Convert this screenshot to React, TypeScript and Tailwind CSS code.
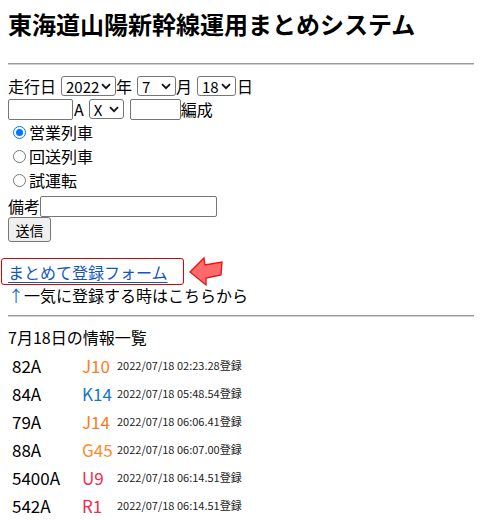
import React from "react";

const FONT = { fontFamily: '"Noto Sans CJK JP", "Noto Sans", sans-serif' };

function Chevron() {
  return (
    <svg width="10" height="7" viewBox="0 0 10 7" className="shrink-0">
      <path d="M1 1.2 L5 5.2 L9 1.2" fill="none" stroke="#111" strokeWidth="1.8" />
    </svg>
  );
}

function FakeSelect({ value, w }: { value: string; w: string }) {
  return (
    <span
      className={`inline-flex h-[20px] items-center justify-between rounded-[3px] border border-[#767676] bg-white pl-[4px] pr-[4px] text-[15px] leading-none text-black ${w}`}
    >
      <span>{value}</span>
      <Chevron />
    </span>
  );
}

const rows = [
  { no: "82A", set: "J10", color: "text-[#ff7a22]", ts: "2022/07/18 02:23.28" },
  { no: "84A", set: "K14", color: "text-[#1478c8]", ts: "2022/07/18 05:48.54" },
  { no: "79A", set: "J14", color: "text-[#ff7a22]", ts: "2022/07/18 06:06.41" },
  { no: "88A", set: "G45", color: "text-[#ff8a2a]", ts: "2022/07/18 06:07.00" },
  { no: "5400A", set: "U9", color: "text-[#f22a52]", ts: "2022/07/18 06:14.51" },
  { no: "542A", set: "R1", color: "text-[#f22a52]", ts: "2022/07/18 06:14.51" },
];

function Radio({ label, checked }: { label: string; checked?: boolean }) {
  return (
    <div className="flex h-6 items-center">
      <span
        className={`ml-[5px] mr-[3px] flex h-[13px] w-[13px] items-center justify-center rounded-full border ${
          checked ? "border-[#0075ff]" : "border-[#767676]"
        } bg-white`}
      >
        {checked && <span className="h-[7px] w-[7px] rounded-full bg-[#0075ff]" />}
      </span>
      <span className="text-[16px] leading-none">{label}</span>
    </div>
  );
}

export default function App() {
  return (
    <div style={FONT} className="w-[482px] bg-white px-2 pt-[10px] text-black">
      <h1 className="text-[24px] font-bold leading-[28px]">東海道山陽新幹線運用まとめシステム</h1>
      <div className="mt-[25px] h-[2px] border-t border-b border-t-[#9a9a9a] border-b-[#d0d0d0]" />

      <div className="mt-[9px] flex h-6 items-center text-[16px] leading-none">
        <span>走行日</span>
        <span className="ml-[5px]"><FakeSelect value="2022" w="w-[55px]" /></span>
        <span>年</span>
        <span className="ml-[5px]"><FakeSelect value="7" w="w-[39px]" /></span>
        <span>月</span>
        <span className="ml-[5px]"><FakeSelect value="18" w="w-[39px]" /></span>
        <span className="ml-[1px]">日</span>
      </div>

      <div className="flex h-[22px] items-center text-[16px] leading-none">
        <span className="h-[21px] w-[65px] rounded-[2px] border border-[#767676] bg-white" />
        <span className="ml-[1px]">A</span>
        <span className="ml-[5px]"><FakeSelect value="X" w="w-[35px]" /></span>
        <span className="ml-[6px] h-[21px] w-[51px] rounded-[2px] border border-[#767676] bg-white" />
        <span>編成</span>
      </div>

      <Radio label="営業列車" checked />
      <Radio label="回送列車" />
      <Radio label="試運転" />

      <div className="mt-[3px] flex h-[22px] items-center text-[16px] leading-none">
        <span>備考</span>
        <span className="h-[21px] w-[177px] rounded-[2px] border border-[#767676] bg-white" />
      </div>

      <div className="flex h-[25px]">
        <span className="inline-flex h-[25px] w-[43px] items-center justify-center rounded-[3px] border border-[#767676] bg-[#efefef] text-[14px] leading-none">
          送信
        </span>
      </div>

      <div className="relative mt-[16px] flex h-[27px] items-center">
        <div className="-ml-[7px] flex h-[27px] w-[183px] items-center rounded-[3px] border border-[#e00000] pl-[6px]">
          <span className="text-[16px] leading-none text-[#1155cc] underline underline-offset-[3px]">
            まとめて登録フォーム
          </span>
        </div>
        <svg width="38" height="34" viewBox="0 0 38 34" className="absolute left-[179px] top-[-3px]">
          <polygon
            points="3,17 17,3 18,10 35,7 34,20 19,23 19,30"
            fill="#ff6b6b"
            stroke="#e81010"
            strokeWidth="1.3"
            strokeLinejoin="miter"
          />
        </svg>
      </div>

      <div className="flex h-[20px] items-center text-[16px] leading-none">
        <span className="text-[#1a73c8]">↑</span>
        <span>一気に登録する時はこちらから</span>
      </div>

      <div className="mt-[10px] h-[2px] border-t border-b border-t-[#9a9a9a] border-b-[#d0d0d0]" />

      <div className="mt-[9px] flex h-[22px] items-center text-[16px] leading-none">7月18日の情報一覧</div>

      <div className="mt-[3px] pl-[4px]">
        {rows.map((r) => (
          <div key={r.no + r.ts} className="grid h-[28px] grid-cols-[70px_35px_auto] items-center">
            <span className="text-[17px] leading-none">{r.no}</span>
            <span className={`text-[17px] leading-none ${r.color}`}>{r.set}</span>
            <span className="text-[11px] leading-none text-[#222]">{r.ts}登録</span>
          </div>
        ))}
      </div>
    </div>
  );
}
